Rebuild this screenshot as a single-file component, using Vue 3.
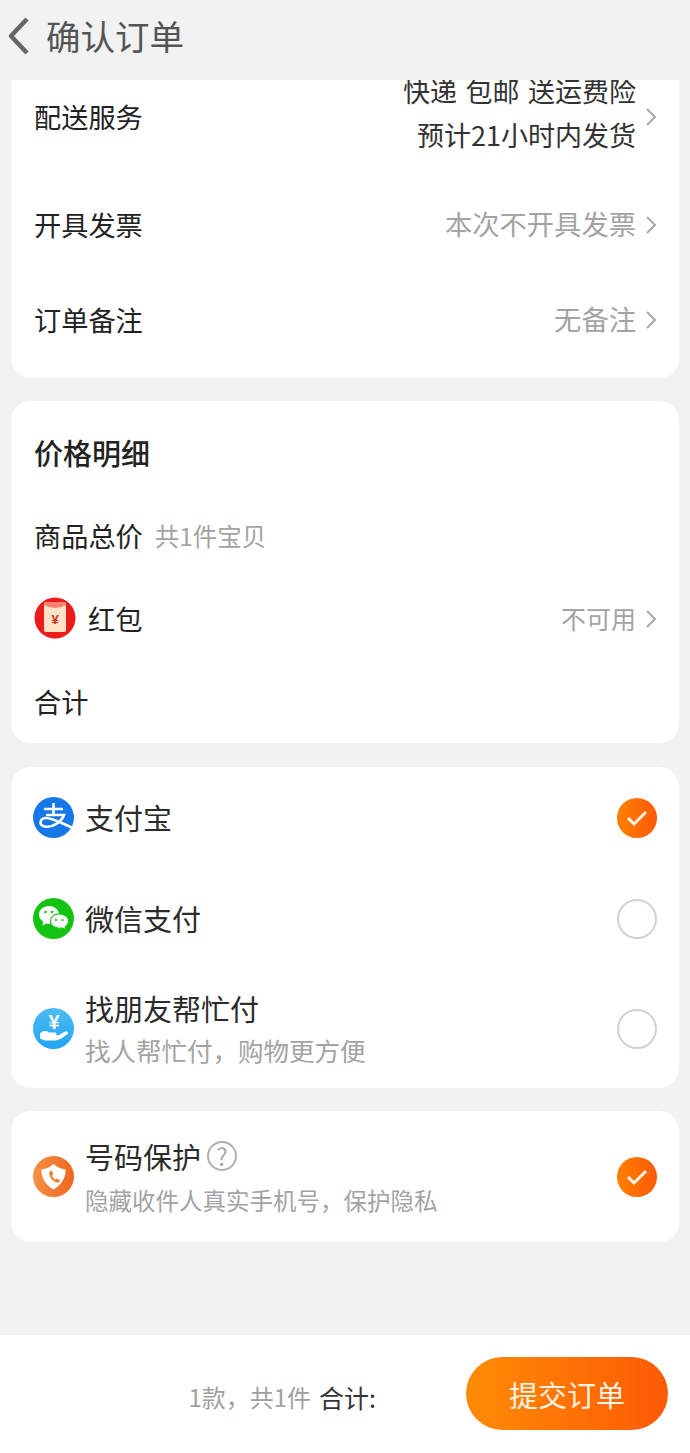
<template>
  <div class="page">
    <header class="nav">
      <svg class="back" width="26" height="40" viewBox="0 0 26 40">
        <path d="M22 3 L6 20 L22 37" fill="none" stroke="#63666b" stroke-width="4.5" stroke-linejoin="round" />
      </svg>
      <span class="nav-title">确认订单</span>
    </header>

    <section class="card card-top">
      <div class="row delivery">
        <span class="label">配送服务</span>
        <div class="delivery-value">
          <div class="delivery-tags">快递 包邮 送运费险</div>
          <div>预计21小时内发货</div>
        </div>
        <svg class="chevron" width="12" height="20" viewBox="0 0 12 20"><path d="M2 2 L10 10 L2 18" /></svg>
      </div>
      <div class="row" v-for="item in options" :key="item.label">
        <span class="label">{{ item.label }}</span>
        <span class="value">{{ item.value }}</span>
        <svg class="chevron" width="12" height="20" viewBox="0 0 12 20"><path d="M2 2 L10 10 L2 18" /></svg>
      </div>
    </section>

    <section class="card price">
      <div class="price-row price-title">价格明细</div>
      <div class="price-row">
        <span class="label">商品总价</span>
        <span class="hint">共1件宝贝</span>
      </div>
      <div class="price-row">
        <svg class="packet-icon" width="42" height="42" viewBox="0 0 42 42">
          <circle cx="21" cy="21" r="20.5" fill="#ec1c1c" />
          <rect x="10" y="5" width="22" height="30" rx="2" fill="#fde3c6" />
          <path d="M10 8 Q21 14 32 8 V7 Q32 5 30 5 H12 Q10 5 10 7 Z" fill="#f8806c" />
          <text x="21" y="27" text-anchor="middle" font-size="13" font-weight="700" fill="#d92a20" font-family="Liberation Sans, sans-serif">¥</text>
        </svg>
        <span class="label packet-label">红包</span>
        <span class="value small">不可用</span>
        <svg class="chevron" width="12" height="20" viewBox="0 0 12 20"><path d="M2 2 L10 10 L2 18" /></svg>
      </div>
      <div class="price-row"><span class="label">合计</span></div>
    </section>

    <section class="card pay">
      <div class="pay-row first">
        <svg class="pay-icon" width="41" height="41" viewBox="0 0 41 41">
          <circle cx="20.5" cy="20.5" r="20.5" fill="#1677e8" />
          <path d="M11 12 H30 M20.5 6 V18 M13 18 H31 C29 24 20 31 12 29.5 C5 28 7 21 13 21 C20 21 30 27 40 31" fill="none" stroke="#fff" stroke-width="2.6" />
        </svg>
        <span class="pay-name">支付宝</span>
        <span class="check">
          <svg width="22" height="18" viewBox="0 0 22 18"><path d="M2 9 L8 15 L20 3" fill="none" stroke="#fff4e8" stroke-width="3" /></svg>
        </span>
      </div>
      <div class="pay-row second">
        <svg class="pay-icon" width="41" height="41" viewBox="0 0 41 41">
          <circle cx="20.5" cy="20.5" r="20.5" fill="#12c312" />
          <path d="M6 16.5 C6 11.5 10.5 8 16 8 C21 8 25.5 11.5 26 16 C20 15 16 20 17.5 26 C16 26.2 14.5 26 13 25.6 L9.5 27.5 L10 23.5 C7.5 21.8 6 19.5 6 16.5 Z" fill="#fff" />
          <path d="M17.5 23 C17.5 19 21.5 16 26 16 C31 16 35.5 19 35.5 23 C35.5 25.4 34 27.2 32 28.6 L32.6 31.5 L29.5 30 C23.5 31 17.5 28 17.5 23 Z" fill="#fff" stroke="#12c312" stroke-width="1" />
          <circle cx="12.5" cy="14" r="1.3" fill="#12c312" />
          <circle cx="19" cy="14" r="1.3" fill="#12c312" />
          <circle cx="23" cy="22" r="1.1" fill="#12c312" />
          <circle cx="29.5" cy="22" r="1.1" fill="#12c312" />
        </svg>
        <span class="pay-name">微信支付</span>
        <span class="radio"></span>
      </div>
      <div class="pay-row third">
        <svg class="pay-icon" width="41" height="41" viewBox="0 0 41 41">
          <defs>
            <linearGradient id="friendBg" x1="0" y1="0" x2="0" y2="1">
              <stop offset="0" stop-color="#4cbcf5" />
              <stop offset="1" stop-color="#22a5f2" />
            </linearGradient>
          </defs>
          <circle cx="20.5" cy="20.5" r="20.5" fill="url(#friendBg)" />
          <text x="21" y="21" text-anchor="middle" font-size="20" font-weight="700" fill="#fff" font-family="Liberation Sans, sans-serif">¥</text>
          <path d="M7 25.5 C10 22.5 13 22.5 16 24.5 H22 C24 24.5 24 27 22 27 H18 L26 27 L32 23.5 C35 23 36 25 34 26.5 C29 30 26 32.5 21 32.5 H12 L7 30.5 Z" fill="#fff" />
        </svg>
        <div class="pay-text">
          <div class="pay-name">找朋友帮忙付</div>
          <div class="pay-sub friend-sub">找人帮忙付，购物更方便</div>
        </div>
        <span class="radio"></span>
      </div>
    </section>

    <section class="card protect">
      <svg class="pay-icon" width="41" height="41" viewBox="0 0 41 41">
        <defs>
          <linearGradient id="protectBg" x1="0" y1="0" x2="1" y2="0">
            <stop offset="0" stop-color="#f59145" />
            <stop offset="1" stop-color="#f0661e" />
          </linearGradient>
        </defs>
        <circle cx="20.5" cy="20.5" r="20.5" fill="url(#protectBg)" />
        <path d="M8.5 13.5 C13 13 17 11 20.5 8 C24 11 28 13 32.5 13.5 C33 22 28 29 20.5 33.5 C13 29 8 22 8.5 13.5 Z" fill="#fff" />
        <path d="M16.5 15.5 L18.8 14.8 L20.4 18.2 L18.8 19.6 C19.5 21.4 20.8 22.8 22.4 23.8 L24 22.4 L27 24.4 L26 26.6 C21 27.4 15 20.5 16.5 15.5 Z" fill="#f07a2e" />
      </svg>
      <div class="pay-text">
        <div class="protect-head">
          <span class="pay-name">号码保护</span>
          <span class="help">?</span>
        </div>
        <div class="pay-sub protect-sub">隐藏收件人真实手机号，保护隐私</div>
      </div>
      <span class="check">
        <svg width="22" height="18" viewBox="0 0 22 18"><path d="M2 9 L8 15 L20 3" fill="none" stroke="#fff4e8" stroke-width="3" /></svg>
      </span>
    </section>

    <footer class="bar">
      <span class="count">1款，共1件</span>
      <span class="sum">合计:</span>
      <button class="submit">提交订单</button>
    </footer>
  </div>
</template>

<script setup>
const options = [
  { label: '开具发票', value: '本次不开具发票' },
  { label: '订单备注', value: '无备注' },
];
</script>

<style scoped>
.page {
  display: flex;
  flex-direction: column;
  width: 690px;
  height: 1453px;
  overflow: hidden;
  background: #f2f2f3;
  color: #222;
  font-family: "Noto Sans CJK SC", "Noto Sans", sans-serif;
}

.nav {
  display: flex;
  align-items: center;
  height: 80px;
  flex-shrink: 0;
  padding: 0 0 10px 5px;
  box-sizing: border-box;
}

.back {
  margin-right: 15px;
  margin-top: 2px;
}

.nav-title {
  font-size: 34.5px;
  color: #555;
}

.card {
  margin: 0 11px 23px;
  background: #fff;
  border-radius: 20px;
}

.card-top {
  border-radius: 0 0 20px 20px;
  height: 298px;
  padding: 0 22px 0 23px;
  overflow: hidden;
  flex-shrink: 0;
  box-sizing: border-box;
}

.row {
  display: flex;
  align-items: center;
  height: 95px;
}

.delivery {
  height: 94px;
  margin: -10px 0 13px;
}

.delivery-value {
  margin-left: auto;
  margin-top: -8px;
  text-align: right;
  font-size: 27px;
  line-height: 44px;
  color: #333;
}

.delivery-tags {
  word-spacing: 2.5px;
}

.label {
  margin-top: -2px;
  font-size: 27.2px;
  line-height: 36px;
}

.value {
  margin-left: auto;
  margin-top: -3px;
  font-size: 27.3px;
  color: #a3a3a3;
}

.value.small {
  margin-top: -1px;
  font-size: 25px;
}

.chevron {
  margin-left: 9px;
  flex-shrink: 0;
}

.chevron path {
  fill: none;
  stroke: #a8a8a8;
  stroke-width: 2;
}

.price {
  flex-shrink: 0;
  height: 342px;
  margin-bottom: 24px;
  padding: 10px 22px 0 23px;
  box-sizing: border-box;
}

.price-row {
  display: flex;
  align-items: center;
  height: 83px;
}

.price-title {
  font-size: 29px;
  font-weight: 500;
  padding-bottom: 2px;
  box-sizing: border-box;
}

.hint {
  margin-left: 12px;
  font-size: 24.5px;
  color: #a3a3a3;
}

.packet-icon {
  margin-top: -1px;
}

.packet-label {
  margin-left: 12px;
}

.pay {
  flex-shrink: 0;
  height: 321px;
  padding: 0 22px;
  box-sizing: border-box;
}

.pay-row {
  display: flex;
  align-items: center;
}

.first {
  height: 101px;
}

.second {
  height: 101px;
}

.third {
  height: 119px;
}

.pay-icon {
  flex-shrink: 0;
  margin-right: 11px;
}

.pay-name {
  margin-top: -2px;
  font-size: 29px;
  line-height: 40px;
  color: #2b2b2b;
}

.pay-text {
  display: flex;
  flex-direction: column;
}

.pay-sub {
  font-size: 25.5px;
  line-height: 36px;
  color: #a3a3a3;
}

.friend-sub {
  margin-top: 4px;
}

.check,
.radio {
  width: 40px;
  height: 40px;
  margin-left: auto;
  flex-shrink: 0;
  border-radius: 50%;
  box-sizing: border-box;
}

.check {
  display: flex;
  align-items: center;
  justify-content: center;
  background: linear-gradient(90deg, #ff8000, #fa5a08);
}

.radio {
  border: 2px solid #d2d2d2;
}

.protect {
  flex-shrink: 0;
  display: flex;
  align-items: center;
  height: 131px;
  padding: 0 22px;
  box-sizing: border-box;
}

.protect-head {
  display: flex;
  align-items: center;
}

.protect-head .pay-name {
  margin-top: 0;
}

.protect-sub {
  margin-top: 6px;
  font-size: 23.5px;
}

.help {
  display: flex;
  align-items: center;
  justify-content: center;
  width: 30px;
  height: 30px;
  margin-left: 6px;
  border: 2px solid #b0b0b0;
  border-radius: 50%;
  box-sizing: border-box;
  font-size: 24px;
  color: #a8a8a8;
}

.bar {
  display: flex;
  align-items: center;
  justify-content: flex-end;
  margin-top: auto;
  height: 118px;
  padding: 0 22px 1px 0;
  background: #fff;
  box-sizing: border-box;
}

.count,
.sum {
  position: relative;
  top: 3px;
}

.count {
  font-size: 24px;
  color: #a0a0a0;
}

.sum {
  margin-left: 8px;
  font-size: 25px;
  color: #333;
}

.submit {
  width: 202px;
  height: 73px;
  margin-left: 90px;
  border: none;
  border-radius: 37px;
  background: linear-gradient(90deg, #ff8c05, #fd5a05);
  color: #fff3e4;
  font-family: inherit;
  font-size: 29px;
}
</style>
